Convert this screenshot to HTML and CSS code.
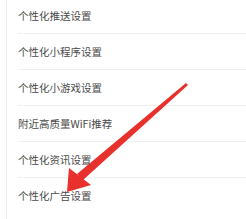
FILE: index.html
```html
<!DOCTYPE html>
<html lang="zh">
<head>
  <meta charset="UTF-8">
  <title>设置</title>
  <link rel="stylesheet" href="styles.css">
</head>
<body>

<div class="page">
  <ul class="menu">
    <li>个性化推送设置</li>
    <li>个性化小程序设置</li>
    <li>个性化小游戏设置</li>
    <li>附近高质量WiFi推荐</li>
    <li>个性化资讯设置</li>
    <li>个性化广告设置</li>
  </ul>

  <!-- 红色箭头 -->
  <svg class="arrow" width="246" height="219" viewBox="0 0 246 219">
    <polygon points="186,83 188,85 83,180 77,174" fill="#e8302c"/>
    <polygon points="67,192 69,168 91,185" fill="#e8302c"/>
  </svg>
</div>

</body>
</html>
```

FILE: styles.css
```css
* { margin: 0; padding: 0; }
body { background: #fff; font-family: "Noto Sans CJK SC", "Liberation Sans", sans-serif; }
.page { position: relative; width: 246px; height: 219px; overflow: hidden; }
.menu { list-style: none; margin-left: 6px; margin-top: -2px;
  border-left: 1px solid #ececec; height: 221px; }
.menu li { height: 35px; line-height: 35px; margin-left: 11px;
  border-bottom: 1px solid #efefef; font-size: 10.5px; color: #4a4a4a;
  white-space: nowrap; }
.menu li:last-child { border-bottom: none; }
.arrow { position: absolute; left: 0; top: 0; }
```
